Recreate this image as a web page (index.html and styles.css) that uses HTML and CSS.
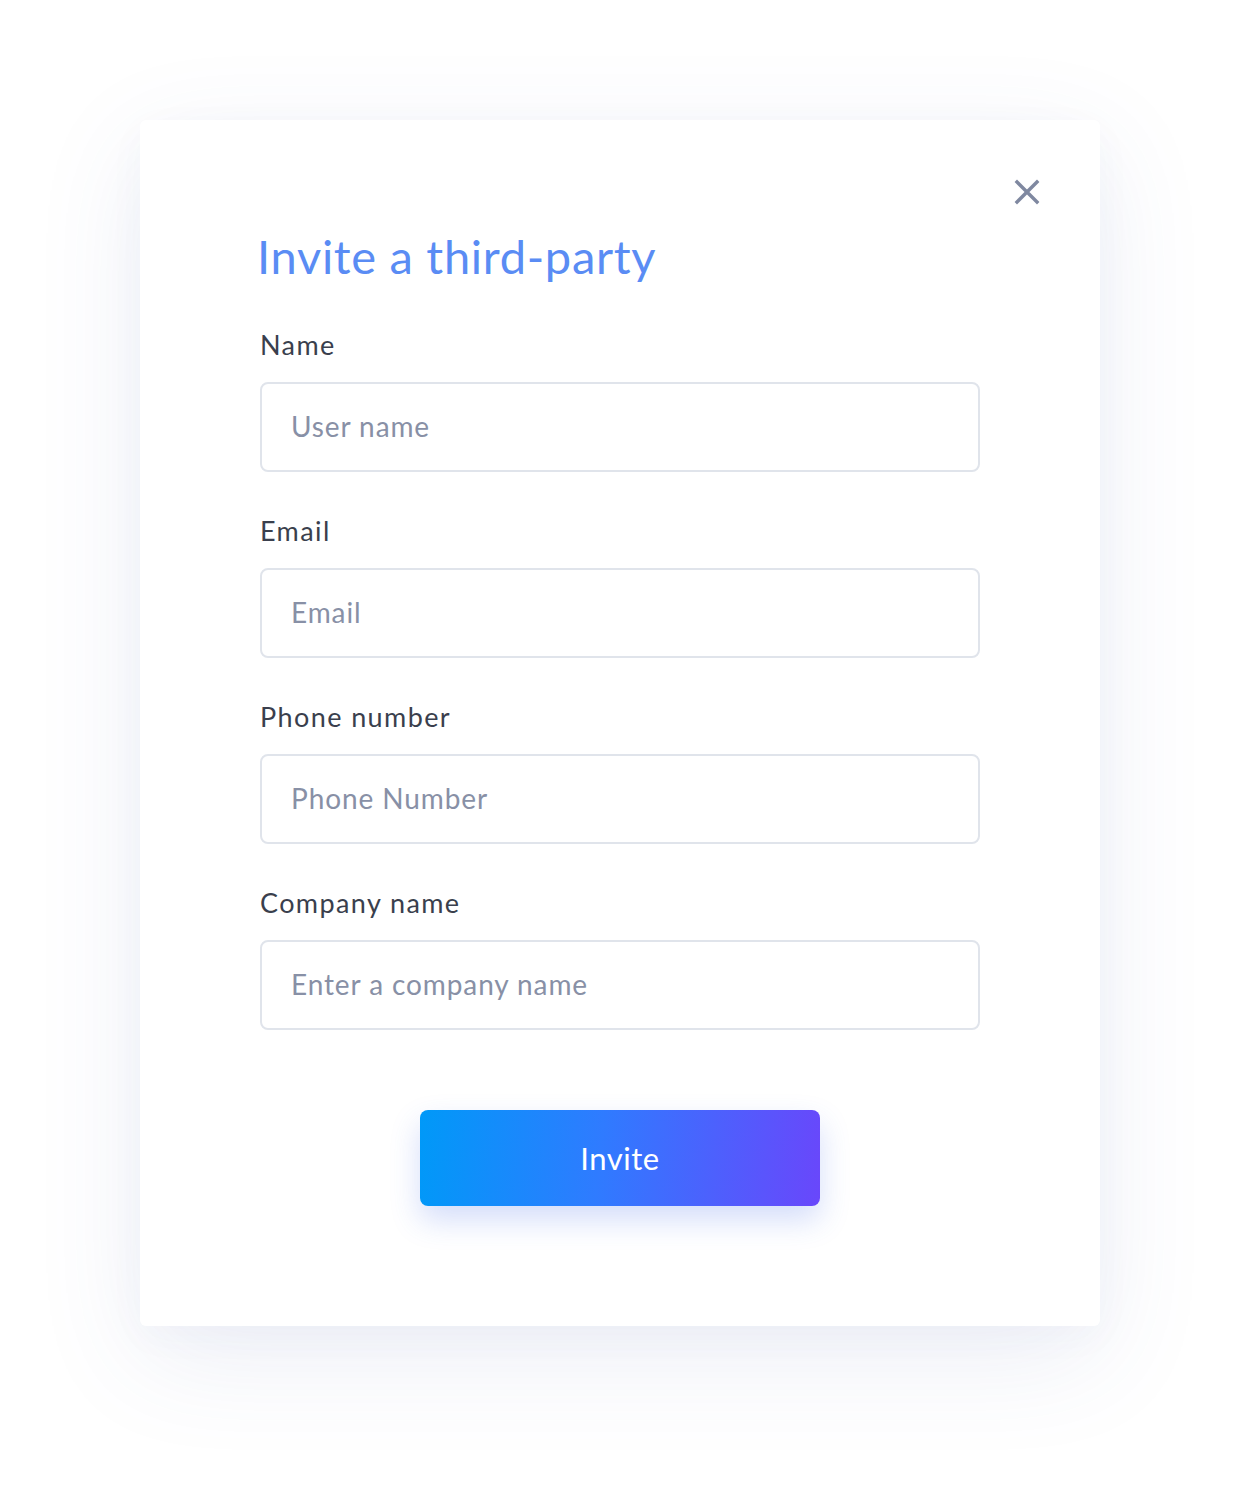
FILE: index.html
```html
<!DOCTYPE html>
<html>
<head>
<meta charset="utf-8">
<link rel="stylesheet" href="styles.css">
</head>
<body>
<div class="page">
  <div class="card">
    <div class="card-top">
      <button class="close" aria-label="Close">
        <svg width="26" height="26" viewBox="0 0 26 26"><path d="M3 3 L23 23 M23 3 L3 23" stroke="#7f88a0" stroke-width="3.4" stroke-linecap="square" fill="none"/></svg>
      </button>
    </div>
    <h1 class="title">Invite a third-party</h1>
    <form class="form">
      <div class="field">
        <label class="label">Name</label>
        <div class="input"><span class="ph">User name</span></div>
      </div>
      <div class="field">
        <label class="label">Email</label>
        <div class="input"><span class="ph">Email</span></div>
      </div>
      <div class="field">
        <label class="label">Phone number</label>
        <div class="input"><span class="ph">Phone Number</span></div>
      </div>
      <div class="field">
        <label class="label">Company name</label>
        <div class="input"><span class="ph">Enter a company name</span></div>
      </div>
      <div class="actions">
        <button class="invite" type="button">Invite</button>
      </div>
    </form>
  </div>
</div>
</body>
</html>
```

FILE: styles.css
```css
html, body {
  margin: 0;
  padding: 0;
  background: #ffffff;
}
body {
  font-family: "Lato", "Open Sans", sans-serif;
  width: 1240px;
  height: 1486px;
  overflow: hidden;
}
.page {
  padding: 120px 140px 160px;
}
.card {
  width: 960px;
  height: 1206px;
  box-sizing: border-box;
  background: #ffffff;
  border-radius: 6px;
  box-shadow: 0 30px 110px rgba(70, 90, 170, 0.10), 0 10px 40px rgba(70, 90, 170, 0.03);
  padding: 56px 120px 0;
}
.card-top {
  display: flex;
  justify-content: flex-end;
  margin-right: -60px;
  height: 32px;
}
.close {
  border: 0;
  background: none;
  padding: 0;
  width: 26px;
  height: 26px;
  margin-top: 3px;
  cursor: pointer;
}
.close svg { display: block; }
.title {
  margin: 20px 0 0 -3px;
  font-weight: 400;
  font-size: 47px;
  line-height: 56px;
  color: #5a8cf4;
  letter-spacing: 0.7px;
}
.form {
  margin-top: 46px;
  display: flex;
  flex-direction: column;
  gap: 44px;
}
.field {
  display: flex;
  flex-direction: column;
  gap: 22px;
}
.label {
  font-size: 27px;
  line-height: 30px;
  color: #3a3f4d;
  letter-spacing: 1.4px;
}
.input {
  height: 90px;
  box-sizing: border-box;
  border: 2px solid #e0e4eb;
  border-radius: 8px;
  display: flex;
  align-items: center;
  padding: 0 29px 3px;
}
.ph {
  font-size: 28px;
  color: #8890a6;
  letter-spacing: 0.9px;
}
.actions {
  display: flex;
  justify-content: center;
  margin-top: 36px;
}
.invite {
  width: 400px;
  height: 96px;
  border: 0;
  border-radius: 8px;
  background: linear-gradient(95deg, #0099f8 0%, #2f7bff 45%, #6947fb 100%);
  color: #ffffff;
  font-family: "Lato", "Open Sans", sans-serif;
  font-size: 31px;
  letter-spacing: 0.5px;
  box-shadow: 0 14px 30px rgba(60, 100, 230, 0.22);
}
```
